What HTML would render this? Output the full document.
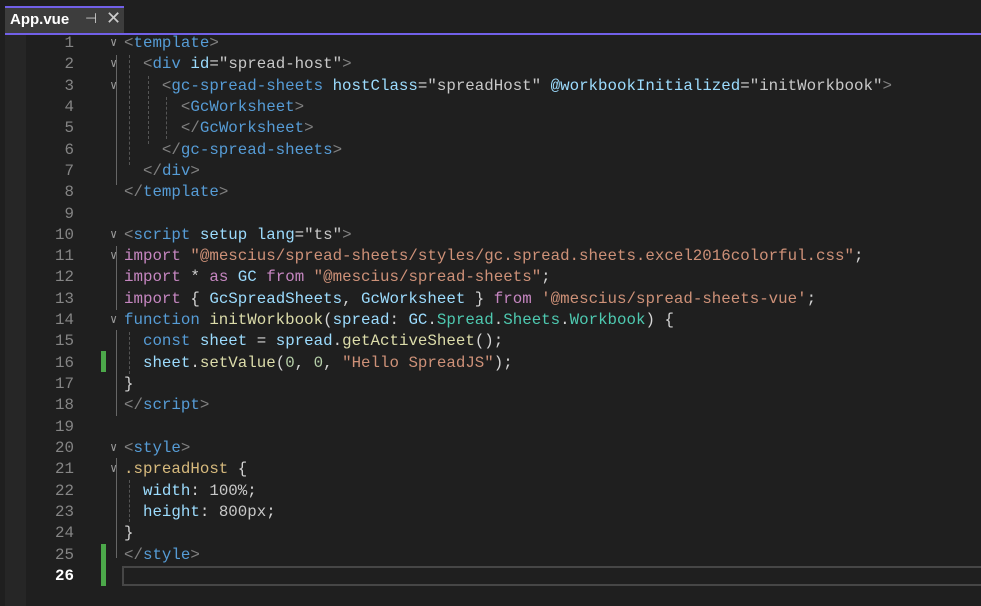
<!DOCTYPE html>
<html><head><meta charset="utf-8"><style>
html,body{margin:0;padding:0;background:#1f1f1f;width:981px;height:606px;overflow:hidden}
.tabbar{position:absolute;left:0;top:0;width:981px;height:36px;background:#1f1f1f}
.tab{position:absolute;left:5px;top:6px;width:119px;height:27px;background:#3d3d3d;border-top:2px solid #7160e8;box-sizing:border-box;font:bold 15px "Liberation Sans",sans-serif;color:#fff}
.tab .t{position:absolute;left:5px;top:3px}
.tab .p{position:absolute;left:80px;top:2px;color:#ccc;font-weight:normal;font-size:14px}
.tab .x{position:absolute;left:101px;top:0px;color:#ccc;font-weight:normal;font-size:18px}
.line{position:absolute;left:5px;top:33px;width:976px;height:2px;background:#7160e8}
.gut{position:absolute;left:5px;top:35px;width:21px;height:571px;background:#262626}
.code{position:absolute;top:33px;left:0;width:981px;font:15.8px/21.32px "Liberation Mono",monospace;color:#d4d4d4}
.r{height:21.32px;position:relative;white-space:pre}
.n{position:absolute;left:34px;color:#858585;text-align:right;width:40px}
.c{position:absolute;left:124px}
.f{position:absolute;left:110px;color:#999;font-size:12px}
.g{color:#808080}.b{color:#569cd6}.a{color:#9cdcfe}.w{color:#c8c8c8}.s{color:#ce9178}.k{color:#c586c0}.y{color:#dcdcaa}.t2{color:#4ec9b0}.num{color:#b5cea8}.sel{color:#d7ba7d}
.chg{position:absolute;left:101px;width:5px;background:#4ca84a}
.guide{position:absolute;border-left:1px dashed #555}
.cur{position:absolute;left:122px;top:566px;width:859px;height:20px;border:2px solid #464646;border-right:none;box-sizing:border-box}
</style></head><body>
<div class="tabbar"><div class="tab"><span class="t">App.vue</span><span class="p">⊣</span><span class="x">✕</span></div></div>
<div class="line"></div>
<div class="gut"></div>
<div class="chg" style="top:351px;height:21px"></div>
<div class="chg" style="top:544px;height:42px"></div>
<div class="guide" style="left:116px;top:55px;height:130px;border-left-style:solid;border-color:#666"></div>
<div class="guide" style="left:129px;top:55px;height:110px"></div>
<div class="guide" style="left:148px;top:76px;height:68px"></div>
<div class="guide" style="left:166px;top:97px;height:42px"></div>
<div class="guide" style="left:116px;top:246px;height:64px;border-left-style:solid;border-color:#666"></div>
<div class="guide" style="left:116px;top:330px;height:86px;border-left-style:solid;border-color:#666"></div>
<div class="guide" style="left:129px;top:332px;height:42px"></div>
<div class="guide" style="left:116px;top:458px;height:100px;border-left-style:solid;border-color:#666"></div>
<div class="guide" style="left:129px;top:480px;height:42px"></div>
<div class="cur"></div>
<div class="code"><div class="r"><span class="n">1</span><span class="f">∨</span><span class="c"><span class="g">&lt;</span><span class="b">template</span><span class="g">&gt;</span></span></div><div class="r"><span class="n">2</span><span class="f">∨</span><span class="c">  <span class="g">&lt;</span><span class="b">div</span> <span class="a">id</span>=<span class="w">"spread-host"</span><span class="g">&gt;</span></span></div><div class="r"><span class="n">3</span><span class="f">∨</span><span class="c">    <span class="g">&lt;</span><span class="b">gc-spread-sheets</span> <span class="a">hostClass</span>=<span class="w">"spreadHost"</span> <span class="a">@workbookInitialized</span>=<span class="w">"initWorkbook"</span><span class="g">&gt;</span></span></div><div class="r"><span class="n">4</span><span class="c">      <span class="g">&lt;</span><span class="b">GcWorksheet</span><span class="g">&gt;</span></span></div><div class="r"><span class="n">5</span><span class="c">      <span class="g">&lt;/</span><span class="b">GcWorksheet</span><span class="g">&gt;</span></span></div><div class="r"><span class="n">6</span><span class="c">    <span class="g">&lt;/</span><span class="b">gc-spread-sheets</span><span class="g">&gt;</span></span></div><div class="r"><span class="n">7</span><span class="c">  <span class="g">&lt;/</span><span class="b">div</span><span class="g">&gt;</span></span></div><div class="r"><span class="n">8</span><span class="c"><span class="g">&lt;/</span><span class="b">template</span><span class="g">&gt;</span></span></div><div class="r"><span class="n">9</span></div><div class="r"><span class="n">10</span><span class="f">∨</span><span class="c"><span class="g">&lt;</span><span class="b">script</span> <span class="a">setup</span> <span class="a">lang</span>=<span class="w">"ts"</span><span class="g">&gt;</span></span></div><div class="r"><span class="n">11</span><span class="f">∨</span><span class="c"><span class="k">import</span> <span class="s">"@mescius/spread-sheets/styles/gc.spread.sheets.excel2016colorful.css"</span>;</span></div><div class="r"><span class="n">12</span><span class="c"><span class="k">import</span> * <span class="k">as</span> <span class="a">GC</span> <span class="k">from</span> <span class="s">"@mescius/spread-sheets"</span>;</span></div><div class="r"><span class="n">13</span><span class="c"><span class="k">import</span> { <span class="a">GcSpreadSheets</span>, <span class="a">GcWorksheet</span> } <span class="k">from</span> <span class="s">'@mescius/spread-sheets-vue'</span>;</span></div><div class="r"><span class="n">14</span><span class="f">∨</span><span class="c"><span class="b">function</span> <span class="y">initWorkbook</span>(<span class="a">spread</span>: <span class="a">GC</span>.<span class="t2">Spread</span>.<span class="t2">Sheets</span>.<span class="t2">Workbook</span>) {</span></div><div class="r"><span class="n">15</span><span class="c">  <span class="b">const</span> <span class="a">sheet</span> = <span class="a">spread</span>.<span class="y">getActiveSheet</span>();</span></div><div class="r"><span class="n">16</span><span class="c">  <span class="a">sheet</span>.<span class="y">setValue</span>(<span class="num">0</span>, <span class="num">0</span>, <span class="s">"Hello SpreadJS"</span>);</span></div><div class="r"><span class="n">17</span><span class="c">}</span></div><div class="r"><span class="n">18</span><span class="c"><span class="g">&lt;/</span><span class="b">script</span><span class="g">&gt;</span></span></div><div class="r"><span class="n">19</span></div><div class="r"><span class="n">20</span><span class="f">∨</span><span class="c"><span class="g">&lt;</span><span class="b">style</span><span class="g">&gt;</span></span></div><div class="r"><span class="n">21</span><span class="f">∨</span><span class="c"><span class="sel">.spreadHost</span> {</span></div><div class="r"><span class="n">22</span><span class="c">  <span class="a">width</span>: <span class="w">100%</span>;</span></div><div class="r"><span class="n">23</span><span class="c">  <span class="a">height</span>: <span class="w">800px</span>;</span></div><div class="r"><span class="n">24</span><span class="c">}</span></div><div class="r"><span class="n">25</span><span class="c"><span class="g">&lt;/</span><span class="b">style</span><span class="g">&gt;</span></span></div><div class="r"><span class="n" style="color:#fff;font-weight:bold">26</span></div></div>
</body></html>
